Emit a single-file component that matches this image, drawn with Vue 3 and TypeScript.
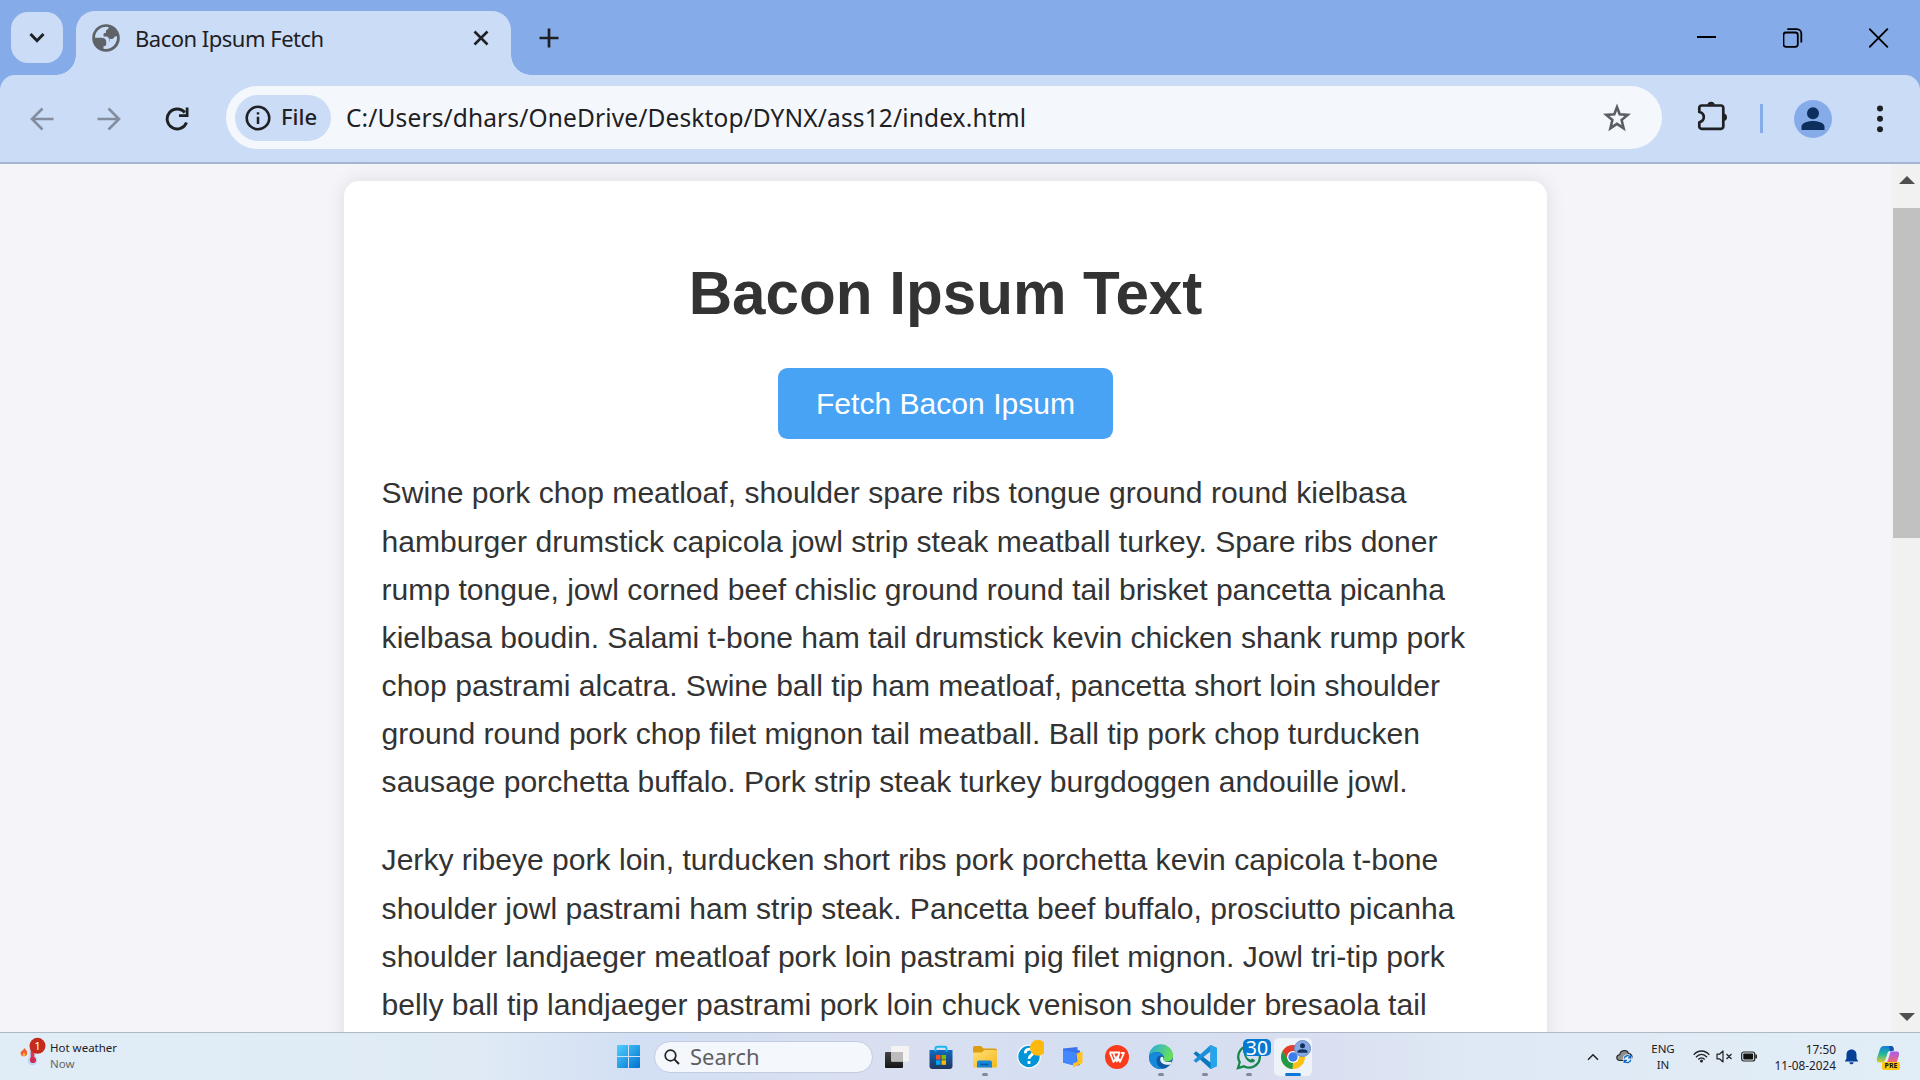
<script setup lang="ts">
interface TaskApp {
  id: string
  running?: boolean
  active?: boolean
}

const paragraphs: string[][] = [
  [
    'Swine pork chop meatloaf, shoulder spare ribs tongue ground round kielbasa',
    'hamburger drumstick capicola jowl strip steak meatball turkey. Spare ribs doner',
    'rump tongue, jowl corned beef chislic ground round tail brisket pancetta picanha',
    'kielbasa boudin. Salami t-bone ham tail drumstick kevin chicken shank rump pork',
    'chop pastrami alcatra. Swine ball tip ham meatloaf, pancetta short loin shoulder',
    'ground round pork chop filet mignon tail meatball. Ball tip pork chop turducken',
    'sausage porchetta buffalo. Pork strip steak turkey burgdoggen andouille jowl.',
  ],
  [
    'Jerky ribeye pork loin, turducken short ribs pork porchetta kevin capicola t-bone',
    'shoulder jowl pastrami ham strip steak. Pancetta beef buffalo, prosciutto picanha',
    'shoulder landjaeger meatloaf pork loin pastrami pig filet mignon. Jowl tri-tip pork',
    'belly ball tip landjaeger pastrami pork loin chuck venison shoulder bresaola tail',
  ],
]

const apps: TaskApp[] = [
  { id: 'taskview' },
  { id: 'store' },
  { id: 'explorer', running: true },
  { id: 'help' },
  { id: 'files' },
  { id: 'wps' },
  { id: 'edge', running: true },
  { id: 'vscode', running: true },
  { id: 'whatsapp', running: true },
  { id: 'chrome', active: true },
]
</script>

<template>
  <div class="screen">
    <header class="tabstrip">
      <button class="tabsearch" aria-label="Search tabs">
        <svg width="16" height="12" viewBox="0 0 16 12"><path d="M1.500 2 8 8.700 14.500 2" fill="none" stroke="#1f2023" stroke-width="3" /></svg>
      </button>
      <div class="tab">
        <svg class="globe" width="28" height="28" viewBox="0 0 28 28">
          <circle cx="14" cy="14" r="13.800" fill="#5f6368" />
          <path d="M14.800 2.900A11 11 0 0 0 2.900 13.800H9.500C12.500 13.800 14.200 15.200 14.200 18H17V15.200C17 13.800 15.800 12.800 14 12.600H11.500V10.500C11.500 9.500 12.500 9 14 8.800V6.500L16.500 4.500V3.100Z" fill="#cbdcf7" />
          <path d="M25 12.200C25.600 19 20.500 25.200 13.600 25.100L11.500 24.700V22.200C13.500 22.200 14.200 21.500 14.200 20V17.500H17.500V14.500C19.500 15.500 22 15.200 22.400 12.800Z" fill="#cbdcf7" />
        </svg>
        <span class="title">Bacon Ipsum Fetch</span>
        <svg width="16" height="16" viewBox="0 0 16 16"><path d="M1.500 1.500 14.500 14.500M14.500 1.500 1.500 14.500" stroke="#1f2023" stroke-width="2.600" /></svg>
      </div>
      <svg class="newtab" width="20" height="20" viewBox="0 0 20 20"><path d="M10 .5V19.500M.5 10H19.500" stroke="#1f2023" stroke-width="2.700" /></svg>
      <div class="winctl">
        <svg width="20" height="20" viewBox="0 0 20 20"><path d="M0 9H19" stroke="#000" stroke-width="2" /></svg>
        <svg width="20" height="20" viewBox="0.700 0 20 20"><rect x="1.200" y="4.500" width="14.300" height="14.300" rx="2.500" fill="none" stroke="#000" stroke-width="1.800" /><path d="M5 1.100H14.500a4.500 4.500 0 0 1 4.500 4.500V14.500" fill="none" stroke="#000" stroke-width="1.800" /></svg>
        <svg width="20" height="20" viewBox="0.500 0 20 20"><path d="M.7.7 19.300 19.300M19.300.7.7 19.300" stroke="#000" stroke-width="1.900" /></svg>
      </div>
    </header>

    <div class="strip-bottom">
      <nav class="toolbar">
        <svg class="back" width="24" height="24" viewBox="0 0 24 24"><path d="M23.500 12H2.500M12.500 1.500 2 12l10.500 10.500" fill="none" stroke="#838d9e" stroke-width="2.600" /></svg>
        <svg class="forward" width="24" height="24" viewBox="0 0 24 24"><path d="M.5 12H21.500M11.500 1.500 22 12 11.500 22.500" fill="none" stroke="#838d9e" stroke-width="2.600" /></svg>
        <svg class="reload" width="24" height="24" viewBox="0 0 24 24"><path d="M21.500 15.500A10 10 0 1 1 19.800 5.500" fill="none" stroke="#1f2023" stroke-width="2.900" /><path d="M23.500.5V10H14V7.200H20.700V.5Z" fill="#1f2023" /></svg>
        <div class="omnibox">
          <div class="chip">
            <svg width="26" height="26" viewBox="0 0 26 26"><circle cx="13" cy="13" r="11.300" fill="none" stroke="#1f2023" stroke-width="2.500" /><path d="M13 11.700V19M13 7.200V9.600" stroke="#1f2023" stroke-width="2.500" /></svg>
            <span>File</span>
          </div>
          <span class="url">C:/Users/dhars/OneDrive/Desktop/DYNX/ass12/index.html</span>
          <svg class="star" width="30" height="30" viewBox="0 0 30 30"><path d="M15 4.200 17.700 11.300 25.700 11.900 19.600 17 21.600 25.200 15 20.800 8.400 25.200 10.400 17 4.300 11.900 12.300 11.300Z" fill="none" stroke="#5b5e63" stroke-width="2.600" /></svg>
        </div>
        <svg class="puzzle" width="32" height="32" viewBox="0 0 32 32"><path d="M4.600 5.500H24a2.300 2.300 0 0 1 2.300 2.300V26.500a2.300 2.300 0 0 1-2.300 2.300H4.600a2.300 2.300 0 0 1-2.300-2.300V22.300C8.300 21 8.300 13.200 2.300 12V7.800a2.300 2.300 0 0 1 2.300-2.300Z" fill="none" stroke="#1f2023" stroke-width="2.700" stroke-linejoin="round" /><path d="M10.300 4.800a3.900 3.900 0 0 1 7.600 0ZM27 13.500a3.900 3.900 0 0 1 0 7.600Z" fill="#1f2023" /></svg>
        <i class="divider"></i>
        <svg class="avatar" width="38" height="38" viewBox="0 0 38 38"><circle cx="19" cy="19" r="19" fill="#85abe9" /><circle cx="19" cy="13.300" r="6" fill="#0d2f5e" /><path d="M7.500 30V26.500C7.500 22.500 15 20.900 19 20.900S30.500 22.500 30.500 26.500V30Z" fill="#0d2f5e" /></svg>
        <svg class="dots" width="6" height="28" viewBox="0 0 6 28"><g fill="#1f2023"><circle cx="3" cy="3.400" r="3" /><circle cx="3" cy="13.800" r="3" /><circle cx="3" cy="24.200" r="3" /></g></svg>
      </nav>
    </div>

    <main class="viewport">
      <div class="page">
        <section class="card">
          <h1>Bacon Ipsum Text</h1>
          <button class="fetch">Fetch Bacon Ipsum</button>
          <div class="output">
            <p v-for="(lines, i) in paragraphs" :key="i">
              <span v-for="line in lines" :key="line" class="line">{{ line }}</span>
            </p>
          </div>
        </section>
      </div>
      <div class="scrollbar">
        <svg width="16" height="8" viewBox="0 0 16 8"><path d="M0 8 8 0 16 8Z" fill="#4f4f4f" /></svg>
        <i class="thumb"></i>
        <svg width="16" height="8" viewBox="0 0 16 8"><path d="M0 0 8 8 16 0Z" fill="#4f4f4f" /></svg>
      </div>
    </main>

    <footer class="taskbar">
      <div class="weather">
        <svg width="28" height="30" viewBox="0 0 28 30">
          <path d="M4 11C7 13 7.500 15 7 17.500 6 20 1.500 20 .6 17 .2 14.800 1.500 14.500 2 13.500 3.500 13.500 3.500 12.500 4 11Z" fill="#f0622d" /><path d="M4 15.500C6 17 5.500 19 3.800 19 2 18.800 2.200 17 4 15.500Z" fill="#ffb347" />
          <rect x="9.500" y="7" width="6" height="16" rx="3" fill="#b9d8f7" /><circle cx="12.500" cy="23.500" r="4.800" fill="#b9d8f7" /><path d="M12.500 10V23" stroke="#df3550" stroke-width="3.500" /><circle cx="13" cy="23" r="3.100" fill="#d52a50" />
          <circle cx="17.500" cy="8.800" r="8" fill="#c42b1c" />
          <text x="17.600" y="12.900" text-anchor="middle" font-size="11.500" fill="#fff" font-family="Noto Sans, sans-serif">1</text>
        </svg>
        <div class="wtext"><span>Hot weather</span><span class="dim">Now</span></div>
      </div>

      <div class="center">
        <svg class="start" width="23" height="23" viewBox="0 0 23 23"><defs><linearGradient id="win" x1="0" y1="0" x2="23" y2="23" gradientUnits="userSpaceOnUse"><stop stop-color="#4fd0ff" /><stop offset="1" stop-color="#0070cf" /></linearGradient></defs><path d="M1 0H11V11H0V1A1 1 0 0 1 1 0ZM12 0H22A1 1 0 0 1 23 1V11H12ZM0 12H11V23H1A1 1 0 0 1 0 22ZM12 12H23V22A1 1 0 0 1 22 23H12Z" fill="url(#win)" /></svg>
        <div class="search">
          <svg width="16" height="16" viewBox="0 0 16 16"><circle cx="6.500" cy="6.500" r="5.300" fill="none" stroke="#222" stroke-width="1.700" /><path d="M10.400 10.400 15 15" stroke="#222" stroke-width="2" /></svg>
          <span>Search</span>
        </div>
        <div v-for="app in apps" :key="app.id" class="app" :class="{ running: app.running, active: app.active }">
          <svg v-if="app.id === 'taskview'" width="26" height="26" viewBox="0 0 26 26"><defs><linearGradient id="tv" x1="0" y1="0" x2="0" y2="1"><stop stop-color="#444" /><stop offset="1" stop-color="#151515" /></linearGradient></defs><rect x="1" y="8" width="18" height="16" rx="1" fill="url(#tv)" /><rect x="7" y="2" width="18" height="15.500" rx="1" fill="#f4f3f2" /><path d="M7 8H19V17.500H8A1 1 0 0 1 7 16.500Z" fill="#bcbcbc" /></svg>
          <svg v-else-if="app.id === 'store'" width="26" height="26" viewBox="0 0 26 26"><defs><linearGradient id="st" x1="0" y1="0" x2="0" y2="1"><stop stop-color="#106ac0" /><stop offset="1" stop-color="#20365d" /></linearGradient></defs><path d="M1.500 6H24.500V22A3 3 0 0 1 21.500 25H4.500A3 3 0 0 1 1.500 22Z" fill="url(#st)" /><path d="M7.500 7.500V4A1.500 1.500 0 0 1 9 2.800H17A1.500 1.500 0 0 1 18.500 4V7.500" fill="none" stroke="#19b9f0" stroke-width="2" /><path d="M8 11h4.500v4.500H8z" fill="#f25022" /><path d="M13.500 11H18v4.500h-4.500z" fill="#7fba00" /><path d="M8 16.300h4.500v4.500H8z" fill="#00a4ef" /><path d="M13.500 16.300H18v4.500h-4.500z" fill="#ffb900" /></svg>
          <svg v-else-if="app.id === 'explorer'" width="26" height="26" viewBox="0 0 26 26"><defs><linearGradient id="ex" x1="0" y1="0" x2="1" y2="1"><stop stop-color="#ffe07a" /><stop offset="1" stop-color="#f5b81c" /></linearGradient></defs><path d="M1 4A2 2 0 0 1 3 2H9L11.500 4.500H23A2 2 0 0 1 25 6.500V9H1Z" fill="#dc9d12" /><path d="M1 8.500H9.500L12.500 6H23A2 2 0 0 1 25 8V22A1.500 1.500 0 0 1 23.500 23.500H2.500A1.500 1.500 0 0 1 1 22Z" fill="url(#ex)" /><path d="M5 23.500V18.500A2 2 0 0 1 7 16.500H18A2 2 0 0 1 20 18.500V23.500Z" fill="#1687d9" /><path d="M8.500 20.500H16.500" stroke="#0b57a0" stroke-width="1.500" /></svg>
          <svg v-else-if="app.id === 'help'" width="30" height="36" viewBox="-2.500 0.500 30 36"><circle cx="12.500" cy="18" r="11.300" fill="#0095d8" stroke="#fff" stroke-width="1.200" /><path d="M8.800 14.800C8.800 9.500 16.800 9.500 16.500 14 16.300 17 12.500 17 12.500 20.300M12.500 22.500V25.500" fill="none" stroke="#fff" stroke-width="2.800" /><circle cx="21.500" cy="9.300" r="8" fill="#ffb90d" /></svg>
          <svg v-else-if="app.id === 'files'" width="24" height="26" viewBox="0 0 24 26"><path d="M2 4.500 16.500 3V6L19 6.500V21L15 22 2 18.500Z" fill="#3a72e9" /><path d="M2 6 15 8.500V22L2 18.500Z" fill="#4387ff" /><path d="M15.500 9.500 21.500 7.500V19L12 23.500V19.500L16.500 17.500Z" fill="#ffc31f" /></svg>
          <svg v-else-if="app.id === 'wps'" width="26" height="26" viewBox="0 0 26 26"><circle cx="13" cy="13" r="12" fill="#fb3c1c" /><path d="M5.500 8.500H15.500L12.800 17.500 9.300 9.500M6 9 9.500 18 13.500 12.500 16 17.800 20 9H17" fill="none" stroke="#fff" stroke-width="1.800" stroke-linejoin="round" /></svg>
          <svg v-else-if="app.id === 'edge'" width="26" height="26" viewBox="0 0 26 26"><defs><linearGradient id="eg" x1="0" y1="0" x2="1" y2=".4"><stop stop-color="#25a9e8" /><stop offset="1" stop-color="#67df57" /></linearGradient></defs><circle cx="13" cy="13" r="12" fill="#0c59a4" /><path d="M1 12.500A12 12 0 0 1 25 12C25 16.500 21 18 17.500 17.500 15 17 14.800 16 15.800 14.500 17 11.500 13 8 8.500 8 5 8 2 10 1 12.500Z" fill="url(#eg)" /><path d="M1 13.500C2 9.500 6 7.800 9.500 8.200 12 8.500 14.500 10 15.500 12 11.500 10.300 8.500 13 8.500 16.500 8.500 20.500 11 23.500 15 24.800 7.500 26 1 21 1 13.500Z" fill="#158adc" /><path d="M15.500 14.500C14.500 17.500 19 19 24 17.500L22.500 20.500C19 21.500 10.500 20 12.500 13.500 13.500 12 15.500 12.500 15.500 14.500Z" fill="#e8f1fb" /></svg>
          <svg v-else-if="app.id === 'vscode'" width="26" height="26" viewBox="0 0 26 26"><path d="M18.500 1 25 4V22L18.500 25 1.500 9.500 4 7.300 18.500 18.500Z" fill="#0878be" /><path d="M18.500 1V7.500L4 18.700 1.500 16.500Z" fill="#1b90d8" /><path d="M18.500 1 25 4V22L18.500 25Z" fill="#25a5ee" /></svg>
          <template v-else-if="app.id === 'whatsapp'"><svg width="26" height="26" viewBox="0 0 26 26"><path d="M2 24 3.700 18.200A10.800 10.800 0 1 1 7.900 22.300Z" fill="none" stroke="#16884b" stroke-width="2.300" /><path d="M8.300 8C9.500 6.500 10.500 8 11 10L10.200 11.500C11 13.500 12.500 15 14.500 15.800L16 14.500 19 16C18.500 19.500 14.500 19 12 17 9.500 15 7.300 11 8.300 8Z" fill="#16884b" /></svg><b class="count">30</b></template>
          <template v-else><svg width="26" height="26" viewBox="0 0 26 26"><circle cx="13" cy="13" r="12" fill="#fbc116" /><path d="M2.600 7A12 12 0 0 1 23.400 7H13L8 16Z" fill="#e33b2e" /><path d="M2.600 7 8.500 16 13 18.500 12.500 25A12 12 0 0 1 2.600 7Z" fill="#229a4a" /><circle cx="13" cy="13" r="6" fill="#fff" /><circle cx="13" cy="13" r="4.700" fill="#3c7ded" /></svg>
            <svg class="profile" width="17" height="17" viewBox="0 0 17 17"><circle cx="8.500" cy="8.500" r="8" fill="#85a9e5" stroke="#6d90c9" /><circle cx="8.500" cy="5.700" r="2.500" fill="#14305c" /><path d="M3.500 12.800V11.500C4 8.500 13 8.500 13.500 11.500V12.800Z" fill="#14305c" /></svg></template>
        </div>
      </div>

      <div class="tray">
        <svg class="up" width="12" height="8" viewBox="0 0 12 8"><path d="M1 6.700 6 1.700 11 6.700" fill="none" stroke="#222" stroke-width="1.500" /></svg>
        <svg class="cloud" width="17" height="15" viewBox="0 0 17 15"><path d="M4 11.500C-.5 11.500 0 6 3.700 5.800 4.500 .5 11.500 .3 12.500 4.500 16 4.500 16.500 8 15.500 9.500L11 11.500Z" fill="#8d8d8d" stroke="#222" stroke-width="1.100" /><circle cx="11.500" cy="10" r="4.800" fill="#e5eff8" /><path d="M8.200 9.500A3.400 3.400 0 0 1 14.500 8.400M14.800 6V8.900H12M14.800 10.700A3.400 3.400 0 0 1 8.500 11.900M8.200 14V11.400H11" fill="none" stroke="#0a66c2" stroke-width="1.300" /></svg>
        <div class="lang"><span>ENG</span><span>IN</span></div>
        <svg class="wifi" width="17" height="13" viewBox="0 0 17 13"><g fill="none" stroke="#222" stroke-width="1.300"><path d="M.7 4.900C5-.3 12-.3 16.300 4.900M3 7.300C6.300 3.500 10.700 3.500 14 7.300M5.300 9.500C7.300 7.200 9.700 7.200 11.700 9.500" /></g><circle cx="8.500" cy="11" r="1.500" fill="#222" /></svg>
        <svg class="mute" width="17" height="13" viewBox="0 0 17 13"><path d="M1 4.200H3.500L7 1V12L3.500 8.800H1ZM10.500 4 15.500 9M15.500 4 10.500 9" fill="none" stroke="#222" stroke-width="1.200" stroke-linejoin="round" /></svg>
        <svg class="battery" width="17" height="11" viewBox="0 0 17 11"><rect x=".7" y="1" width="13" height="9" rx="2" fill="none" stroke="#222" stroke-width="1.200" /><rect x="2.300" y="2.600" width="9.800" height="5.800" rx=".6" fill="#111" /><path d="M14.300 3.500H15.200A1 1 0 0 1 16 4.500V6.500A1 1 0 0 1 15.200 7.500H14.300Z" fill="#222" /></svg>
        <div class="clock"><span>17:50</span><span>11-08-2024</span></div>
        <svg class="bell" width="15" height="16" viewBox="0 0 15 16"><path d="M7.500 .5C10.800 .5 12.500 3 12.500 5.500V9.500L14 12V12.500H1V12L2.500 9.500V5.500C2.500 3 4.200 .5 7.500 .5ZM5.300 13.300H9.700C9.300 16 5.700 16 5.300 13.300Z" fill="#063f96" /></svg>
        <div class="copilot">
          <svg width="24" height="24" viewBox="0 0 24 24"><defs><linearGradient id="cp1" x1="0" y1="0" x2="0" y2="1"><stop stop-color="#137fd8" /><stop offset=".5" stop-color="#25b89a" /><stop offset="1" stop-color="#e2cd2b" /></linearGradient><linearGradient id="cp2" x1="0" y1="0" x2="0" y2="1"><stop stop-color="#a65bf0" /><stop offset="1" stop-color="#fa6a63" /></linearGradient></defs><path d="M8 1H15C17 1 17.500 3 18 5L14 6C12 6 11.500 8 11 10L9 15.500C8.500 17 7.500 17.500 5.500 17.500H3C1 17.500 .5 15.500 1 13L4 4C4.800 2 6 1 8 1Z" fill="url(#cp1)" /><path d="M15.500 6.500H20.500C23 6.500 23.500 8.500 22.800 11L20.500 18H8.500C10.500 18 11.500 16.500 12 15L14 8.500C14.300 7.300 14.800 6.500 15.500 6.500Z" fill="url(#cp2)" /><path d="M13 1H15.500C17 1 17.500 3 18 5.500L14 6.500Z" fill="#194fb5" /></svg>
          <b>PRE</b>
        </div>
      </div>
    </footer>
  </div>
</template>

<style>
html, body { margin: 0; overflow: hidden; }
</style>

<style scoped>
* { box-sizing: border-box; }
svg { display: block; flex: none; }
button { border: 0; padding: 0; }
.screen { width: 1920px; height: 1080px; display: flex; flex-direction: column; overflow: hidden; font-family: "Noto Sans", sans-serif; color: #1f2023; }

.tabstrip { height: 75px; flex: none; display: flex; background: #85abe9; padding-left: 11px; }
.tabsearch { width: 52px; height: 51px; margin-top: 12px; border-radius: 17px; background: #cbdcf7; display: flex; align-items: center; justify-content: center; }
.tab { position: relative; margin: 11px 0 0 13px; width: 435px; height: 64px; border-radius: 19px 19px 0 0; background: #cbdcf7; display: flex; align-items: center; padding: 0 22px 10px 16px; }
.tab::before, .tab::after { content: ""; position: absolute; bottom: 0; width: 20px; height: 20px; }
.tab::before { right: 100%; background: radial-gradient(circle at 0 0, transparent 19.500px, #cbdcf7 20px); }
.tab::after { left: 100%; background: radial-gradient(circle at 100% 0, transparent 19.500px, #cbdcf7 20px); }
.title { flex: 1; margin-left: 15px; font-size: 22px; line-height: 30px; letter-spacing: -.5px; white-space: nowrap; padding-bottom: 1px; }
.newtab { margin: 28px 0 0 28px; }
.winctl { margin: 28px 31px 0 auto; display: flex; gap: 66px; }

.strip-bottom { background: #85abe9; height: 89px; flex: none; }
.toolbar { height: 89px; background: #cbdcf7; border-bottom: 2px solid #a4b4d2; border-radius: 15px 15px 0 0; display: flex; align-items: center; padding: 0 37px 0 30px; }
.forward { margin-left: 43px; }
.reload { margin-left: 44px; }
.omnibox { width: 1436px; height: 63px; margin: -2px 0 0 37px; border-radius: 32px; background: #f4f8fd; display: flex; align-items: center; padding: 0 30px 0 9px; }
.chip { width: 96px; height: 46px; border-radius: 23px; background: #cbdcf7; display: flex; align-items: center; padding-left: 10px; }
.chip span { margin: -3px 0 0 10px; font-size: 22px; font-weight: 500; }
.url { flex: 1; margin-left: 15px; font-size: 24.500px; letter-spacing: .13px; white-space: nowrap; padding-bottom: 1px; }
.puzzle { margin-left: 35px; margin-top: -6px; }
.divider { width: 3px; height: 29px; margin-left: 31px; background: #85abe9; }
.avatar { margin-left: 31px; }
.dots { margin-left: 45px; }

.viewport { flex: 1; min-height: 0; display: flex; background: #f4f4f9; }
.page { width: 1891px; display: flex; justify-content: center; overflow: hidden; padding-top: 17px; }
.card { width: 1203px; height: 1500px; flex: none; background: #fff; border-radius: 15px; box-shadow: 0 0 19px rgba(0, 0, 0, .1); padding: 37.600px; display: flex; flex-direction: column; align-items: center; font-family: "Liberation Sans", Arial, sans-serif; color: #333; }
h1 { margin: 40px 0 0; font-size: 60.160px; line-height: 69px; white-space: nowrap; }
.fetch { width: 335px; height: 71px; margin-top: 40px; border-radius: 9.400px; background: #48a3f4; color: #fff; font: 30.080px "Liberation Sans", Arial, sans-serif; white-space: nowrap; padding-top: 1px; }
.output { align-self: stretch; margin-top: 30.800px; font-size: 30.080px; line-height: 48.130px; }
p { margin: 0 0 30.150px; }
.line { display: block; white-space: nowrap; }
.scrollbar { width: 29px; background: #f1f1f1; display: flex; flex-direction: column; align-items: center; padding: 12px 0 11px 2px; }
.thumb { width: 27px; height: 330px; margin: 24px 0 auto; background: #c1c1c1; }

.taskbar { height: 48px; flex: none; border-top: 1px solid #adb9c7; background: linear-gradient(90deg, #e1edf6 0, #dfeaf5 480px, #d2dff4 640px, #d9dff1 850px, #d5dff2 1100px, #d9def0 1300px, #dfe9f5 1480px, #e1edf7 1920px); display: flex; position: relative; }
.weather { display: flex; padding: 4px 0 0 20px; width: 617px; }
.wtext { display: flex; flex-direction: column; margin: 3px 0 0 2px; font-size: 11.500px; line-height: 16px; }
.dim { color: #5f666c; }
.center { display: flex; align-items: center; }
.search { width: 219px; height: 32px; margin: 0 0 0 13.500px; border: 1px solid #c3cbe3; border-radius: 16px; background: #f4f7fc; display: flex; align-items: center; padding-left: 9.500px; font-size: 22px; color: #5f6061; }
.search span { margin: -1px 0 0 10px; }
.app { position: relative; width: 38px; height: 38px; margin-right: 6px; display: flex; align-items: center; justify-content: center; border-radius: 5px; }
.app:nth-child(3) { margin-left: 5.500px; }
.app.running::after, .app.active::after { content: ""; position: absolute; bottom: 0; width: 6px; height: 3px; border-radius: 2px; background: #858993; }
.app.active { background: #eef2f9; }
.app.active::after { width: 16px; background: #0a78d4; }
.count { position: absolute; left: 13px; top: 1px; width: 28px; height: 17px; border-radius: 5px; background: #0878d1; color: #fff; font-size: 19.500px; font-weight: 400; line-height: 17px; text-align: center; }
.profile { position: absolute; left: 20px; top: 2px; }
.tray { margin-left: auto; display: flex; align-items: center; font-size: 11.500px; line-height: 16px; padding-right: 20px; }
.lang, .clock { display: flex; flex-direction: column; }
.lang { align-items: center; width: 24px; margin-left: 18px; }
.clock { align-items: flex-end; width: 66px; margin-left: 12.500px; white-space: nowrap; font-size: 11.800px; }
.cloud { margin-left: 17px; }
.wifi { margin-left: 17.500px; }
.mute { margin-left: 6.500px; }
.battery { margin-left: 7.500px; }
.bell { margin-left: 7.500px; }
.copilot { position: relative; margin-left: 17.500px; }
.copilot b { position: absolute; left: 6px; bottom: -1px; width: 18px; height: 8px; border-radius: 2px; background: #ffc70f; color: #111; font-size: 7px; line-height: 8px; text-align: center; }
</style>
